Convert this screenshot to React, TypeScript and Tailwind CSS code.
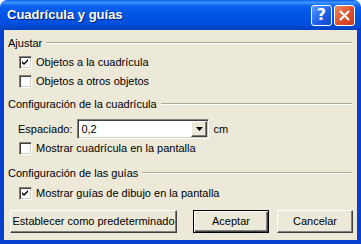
import { FC, ReactNode } from "react";

const font = "font-['Tahoma','Liberation_Sans',sans-serif]";

const Check: FC<{ checked?: boolean; label: string }> = ({ checked, label }) => (
    <div className="flex items-center h-[19px] pl-[15px]">
        <span className="w-[13px] h-[13px] bg-white border border-t-[#808080] border-l-[#808080] border-b-white border-r-white shadow-[inset_1px_1px_0_#404040,inset_-1px_-1px_0_#d4d0c8] flex items-center justify-center">
            {checked && (
                <svg width="7" height="7" viewBox="0 0 7 7">
                    <path d="M0 2 L2 4 L6 0 L6 2 L2 6 L0 4 Z" fill="#000" />
                </svg>
            )}
        </span>
        <span className="ml-[4px]">{label}</span>
    </div>
);

const Heading: FC<{ children: ReactNode; className?: string }> = ({ children, className }) => (
    <div className={`flex items-center h-[14px] pl-[4px] pr-[5px] ${className || ""}`}>
        <span>{children}</span>
        <span className="flex-1 ml-[4px] h-[2px] border-t border-t-[#aca899] border-b border-b-white" />
    </div>
);

const Btn: FC<{ children: ReactNode; className?: string; def?: boolean }> = ({ children, className, def }) => (
    <button
        type="button"
        className={`h-[23px] bg-[#ece9d8] flex items-center justify-center ${
            def
                ? "border border-black shadow-[inset_1px_1px_0_#fff,inset_-1px_-1px_0_#404040,inset_-2px_-2px_0_#808080]"
                : "border border-t-white border-l-white border-b-[#404040] border-r-[#404040] shadow-[inset_-1px_-1px_0_#808080]"
        } ${className || ""}`}
    >
        {children}
    </button>
);

export default function App() {
    return (
        <div className={`w-[361px] h-[244px] flex flex-col text-[11px] text-black ${font}`}>
            {/* title bar */}
            <div className="h-[30px] rounded-t-[7px] bg-[linear-gradient(to_bottom,#0a5fe8_0%,#3d95ff_8%,#0a62ef_20%,#0055e5_50%,#0050dc_80%,#003fc2_100%)] flex items-center pl-[7px] pr-[6px]">
                <span className="text-white font-bold text-[13px] font-['Trebuchet_MS','Liberation_Sans',sans-serif] [text-shadow:1px_1px_0_#0a1e6e]">
                    Cuadrícula y guías
                </span>
                <div className="ml-auto flex gap-[2px]">
                    <div className="w-[21px] h-[21px] rounded-[3px] border border-white bg-[linear-gradient(135deg,#5e9cff,#1c5ce8_60%,#1448c8)] flex items-center justify-center text-white font-bold text-[16px] font-['DejaVu_Sans',sans-serif]">
                        ?
                    </div>
                    <div className="w-[21px] h-[21px] rounded-[3px] border border-white bg-[linear-gradient(135deg,#f08a62,#e0502c_55%,#c8381c)] flex items-center justify-center">
                        <svg width="11" height="11" viewBox="0 0 11 11">
                            <path d="M1 1 L10 10 M10 1 L1 10" stroke="#fff" strokeWidth="2.2" />
                        </svg>
                    </div>
                </div>
            </div>
            {/* body */}
            <div className="flex-1 flex flex-col bg-[#ece9d8] border-l-4 border-r-4 border-b-4 border-[#0841d0]">
                <Heading className="mt-[6px]">Ajustar</Heading>
                <div className="mt-[3px]">
                    <Check checked label="Objetos a la cuadrícula" />
                    <Check label="Objetos a otros objetos" />
                </div>
                <Heading className="mt-[6px]">Configuración de la cuadrícula</Heading>
                <div className="flex items-center h-[20px] mt-[8px] pl-[14px]">
                    <span>Espaciado:</span>
                    <div className="ml-[5px] w-[132px] h-[20px] bg-white border border-t-[#808080] border-l-[#808080] border-b-white border-r-white shadow-[inset_1px_1px_0_#404040,inset_-1px_-1px_0_#d4d0c8] flex items-center">
                        <span className="pl-[3px] flex-1">0,2</span>
                        <div className="w-[16px] h-[16px] mr-[1px] bg-[#ece9d8] border border-t-white border-l-white border-b-[#404040] border-r-[#404040] shadow-[inset_-1px_-1px_0_#808080] flex items-center justify-center">
                            <svg width="7" height="4" viewBox="0 0 7 4">
                                <path d="M0 0 L7 0 L3.5 4 Z" fill="#000" />
                            </svg>
                        </div>
                    </div>
                    <span className="ml-[4px]">cm</span>
                </div>
                <Check label="Mostrar cuadrícula en la pantalla" />
                <Heading className="mt-[8px]">Configuración de las guías</Heading>
                <div className="mt-[4px]">
                    <Check checked label="Mostrar guías de dibujo en la pantalla" />
                </div>
                <div className="flex mt-[7px] pl-[6px]">
                    <Btn className="w-[167px]">Establecer como predeterminado</Btn>
                    <Btn def className="w-[76px] ml-[16px]">
                        Aceptar
                    </Btn>
                    <Btn className="w-[76px] ml-[8px]">Cancelar</Btn>
                </div>
            </div>
        </div>
    );
}
